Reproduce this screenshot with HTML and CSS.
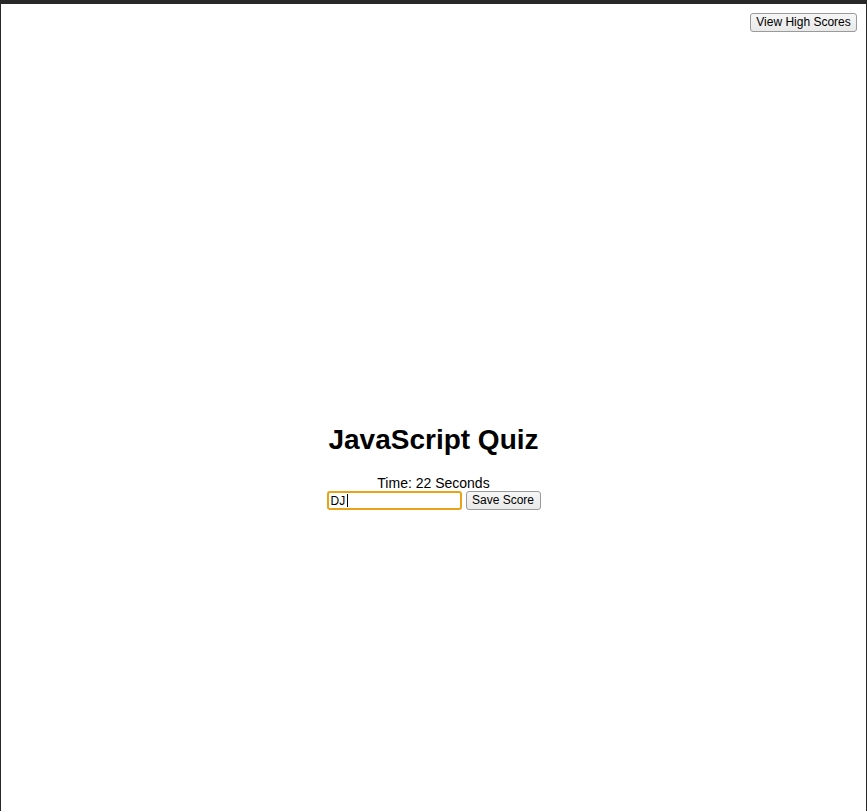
FILE: index.html
```html
<!DOCTYPE html>
<html lang="en">
<head>
<meta charset="utf-8">
<title>JavaScript Quiz</title>
<link rel="stylesheet" href="styles.css">
</head>
<body>
<div class="frame">
  <header class="topbar">
    <button class="btn" type="button">View High Scores</button>
  </header>
  <main class="quiz">
    <h1 class="title">JavaScript Quiz</h1>
    <div class="timer">Time: 22 Seconds</div>
    <form class="save-row">
      <span class="field">
        <input class="initials" type="text" value="DJ">
        <span class="caret"></span>
      </span>
      <button class="btn" type="button">Save Score</button>
    </form>
  </main>
</div>
</body>
</html>
```
FILE: styles.css
```css
html, body {
  margin: 0;
  padding: 0;
  background: #ffffff;
}
body {
  font-family: "Liberation Sans", Arial, sans-serif;
  color: #000;
}
.frame {
  box-sizing: border-box;
  height: 811px;
  border-top: 4px solid #282828;
  border-left: 1px solid #282828;
  border-right: 1px solid #282828;
  display: flex;
  flex-direction: column;
}
.topbar {
  display: flex;
  justify-content: flex-end;
  padding: 9px 9px 0 0;
}
.btn {
  box-sizing: border-box;
  height: 19px;
  padding: 0;
  white-space: nowrap;
  font-family: "Liberation Sans", Arial, sans-serif;
  font-size: 12px;
  line-height: 17px;
  color: #000;
  background: linear-gradient(#f6f6f6, #e9e9e9);
  border: 1px solid #9a9a9a;
  border-radius: 3px;
}
.topbar .btn {
  width: 107px;
}
.quiz {
  margin-top: 392px;
  text-align: center;
}
.title {
  margin: 0 0 19px;
  font-size: 28px;
  font-weight: bold;
  line-height: 32px;
}
.timer {
  font-size: 14px;
  line-height: 16px;
}
.save-row {
  margin: 0;
  display: flex;
  justify-content: center;
  align-items: center;
  gap: 4px;
}
.field {
  position: relative;
  display: inline-block;
}
.initials {
  box-sizing: border-box;
  display: block;
  width: 135px;
  height: 19px;
  margin: 0;
  padding: 0 2px;
  font-family: "Liberation Sans", Arial, sans-serif;
  font-size: 12px;
  color: #000;
  border: 2px solid #e8a317;
  border-radius: 3px;
  outline: none;
  background: #fff;
}
.caret {
  position: absolute;
  left: 20px;
  top: 3px;
  width: 1px;
  height: 13px;
  background: #000;
}
.save-row .btn {
  width: 75px;
}
```
